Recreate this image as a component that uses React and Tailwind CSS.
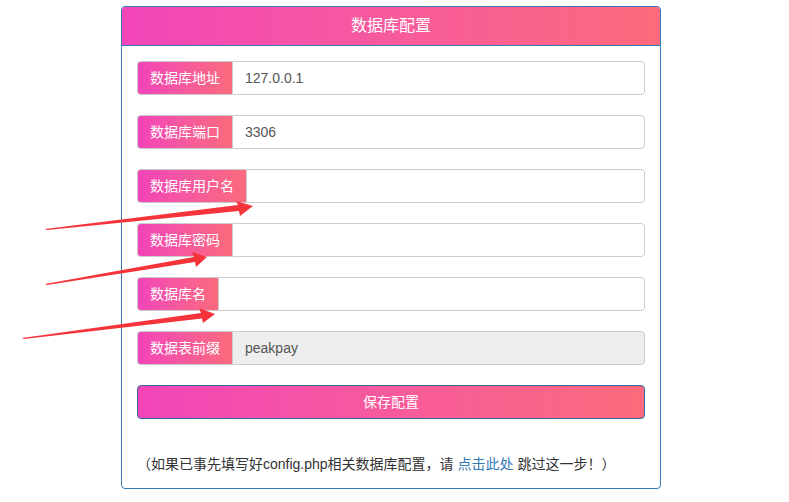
import React from "react";

const font = { fontFamily: '"Liberation Sans", "Noto Sans CJK SC", sans-serif' };

function Row({ label, value, disabled }) {
  return (
    <div className="flex h-[34px] w-full">
      <div className="flex items-center whitespace-nowrap rounded-l-[4px] border border-r-0 border-[#ccc] bg-gradient-to-r from-[#f243b9] to-[#fb6a7c] px-[12px] text-[14px] text-white">
        {label}
      </div>
      <div
        className={
          "flex flex-1 items-center rounded-r-[4px] border border-[#ccc] px-[12px] text-[14px] text-[#555] " +
          (disabled ? "bg-[#eee]" : "bg-white")
        }
      >
        {value}
      </div>
    </div>
  );
}

export default function App() {
  return (
    <div className="relative h-[502px] w-[789px] bg-white" style={font}>
      <div className="pt-[6px] pl-[121px]">
        <div className="w-[540px] overflow-hidden rounded-[4px] border border-[#337ab7]">
          <div className="flex h-[39px] items-center justify-center border-b border-[#337ab7] bg-gradient-to-r from-[#f244b9] to-[#fc6a7b] text-[16px] text-white">
            数据库配置
          </div>
          <div className="flex flex-col gap-[20px] px-[15px] pt-[15px]">
            <Row label="数据库地址" value="127.0.0.1" />
            <Row label="数据库端口" value="3306" />
            <Row label="数据库用户名" value="" />
            <Row label="数据库密码" value="" />
            <Row label="数据库名" value="" />
            <Row label="数据表前缀" value="peakpay" disabled />
            <div className="flex h-[34px] items-center justify-center rounded-[4px] border border-[#2e6da4] bg-gradient-to-r from-[#f244b9] to-[#fc6a7b] text-[14px] text-white">
              保存配置
            </div>
          </div>
          <p className="mt-[35px] mb-[14px] px-[15px] text-[14px] leading-[20px] text-[#333]">
            （如果已事先填写好config.php相关数据库配置，请 <span className="text-[#337ab7]">点击此处</span> 跳过这一步！）
          </p>
        </div>
      </div>
      <svg className="pointer-events-none absolute left-0 top-0" width="789" height="502">
        <g fill="#f5333a">
          <polygon points="45,229 238,205 236,201 253,206 240,216 239,211 47,230" />
          <polygon points="45,284 194,257 192,252 207,257 196,267 195,262 47,285" />
          <polygon points="22,338 201,313 199,308 215,314 203,323 202,318.5 24,339" />
        </g>
      </svg>
    </div>
  );
}
